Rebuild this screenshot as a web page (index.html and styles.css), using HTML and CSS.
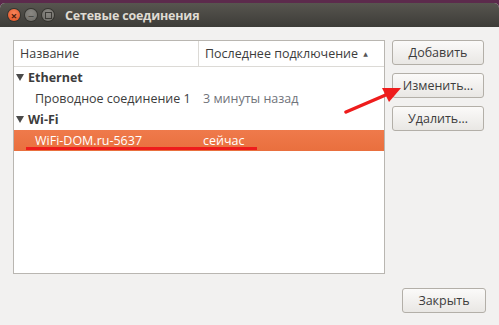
FILE: index.html
```html
<!DOCTYPE html>
<html lang="ru">
<head>
    <meta charset="UTF-8">
    <title>Сетевые соединения</title>
    <link rel="stylesheet" href="styles.css">
</head>
<body>
    <div class="window">
        <div class="titlebar">
            <span class="wbtn close">&times;</span>
            <span class="wbtn minimize">&minus;</span>
            <span class="wbtn maximize"><i></i></span>
            <span class="title">Сетевые соединения</span>
        </div>

        <div class="content">
            <div class="main-row">
                <div class="tree">
                    <div class="tree-header">
                        <div class="col-name">Название</div>
                        <div class="col-last">Последнее подключение <span class="sort">&#9650;</span></div>
                    </div>
                    <div class="row group"><span class="expander"></span>Ethernet</div>
                    <div class="row child">
                        <div class="col-name">Проводное соединение 1</div>
                        <div class="col-last muted">3 минуты назад</div>
                    </div>
                    <div class="row group"><span class="expander"></span>Wi-Fi</div>
                    <div class="row child selected">
                        <div class="col-name">WiFi-DOM.ru-5637</div>
                        <div class="col-last">сейчас</div>
                    </div>
                </div>

                <div class="actions">
                    <button>Добавить</button>
                    <button>Изменить…</button>
                    <button>Удалить…</button>
                </div>
            </div>

            <div class="footer">
                <button class="close-btn">Закрыть</button>
            </div>
        </div>

        <!-- annotation marks drawn over the screenshot -->
        <div class="underline"></div>
        <svg class="arrow" width="70" height="36" viewBox="0 0 70 36">
            <line x1="2" y1="32" x2="44" y2="14" stroke="#ee1c1c" stroke-width="3.5" stroke-linecap="round"/>
            <polygon points="57,8 38,8 45,22" fill="#ee1c1c"/>
        </svg>
    </div>
</body>
</html>
```

FILE: styles.css
```css
/* Global */
body {
    margin: 0;
    background: #5c2a4c;
    font-family: "Open Sans", "DejaVu Sans", sans-serif;
    font-size: 12.5px;
    color: #3c3c3c;
}

.window {
    position: relative;
    margin-top: 3px;
    height: 322px;
    background: #f2f1f0;
    border-radius: 5px 5px 0 0;
    overflow: hidden;
}

/* Title bar */
.titlebar {
    height: 24px;
    display: flex;
    align-items: center;
    padding-left: 8px;
    background: linear-gradient(#57554f, #3d3c38);
}

.wbtn {
    width: 12px;
    height: 12px;
    border-radius: 50%;
    margin-right: 5px;
    display: flex;
    align-items: center;
    justify-content: center;
    font-size: 11px;
    line-height: 1;
    color: #3b3a36;
    background: radial-gradient(circle at 50% 35%, #8a8883, #6c6a65);
    box-shadow: 0 0 0 1px #35342f;
}

.wbtn.close {
    background: radial-gradient(circle at 50% 35%, #f8845a, #df4f20);
    color: #4a1c0c;
    font-weight: bold;
}

.wbtn.maximize i {
    width: 5px;
    height: 5px;
    border: 1px solid #3b3a36;
}

.title {
    margin-left: 6px;
    font-weight: bold;
    font-size: 12.5px;
    letter-spacing: -0.2px;
    color: #dfdbd2;
}

/* Content */
.content {
    padding: 13px 13px 0 13px;
}

.main-row {
    display: flex;
    gap: 7px;
}

.tree {
    width: 370px;
    height: 232px;
    background: #fff;
    border: 1px solid #b9b6b1;
}

.tree-header {
    display: flex;
    height: 25px;
    align-items: center;
    border-bottom: 1px solid #dcdad6;
}

.tree-header .col-name {
    width: 178px;
    padding-left: 6px;
    border-right: 1px solid #dcdad6;
    height: 100%;
    display: flex;
    align-items: center;
}

.tree-header .col-last {
    padding-left: 6px;
}

.sort {
    font-size: 6px;
    vertical-align: 2px;
    margin-left: 2px;
    color: #555;
}

.row {
    height: 21px;
    display: flex;
    align-items: center;
}

.row.group {
    font-weight: bold;
    padding-left: 2px;
}

.expander {
    width: 0;
    height: 0;
    border-left: 4px solid transparent;
    border-right: 4px solid transparent;
    border-top: 7px solid #4a4a4a;
    margin-right: 4px;
}

.row.child .col-name {
    width: 168px;
    padding-left: 21px;
}

.muted {
    color: #70737a;
}

.row.selected {
    background: linear-gradient(#ef7a4b, #e96f3e);
    color: #fff;
}

/* Buttons */
.actions {
    display: flex;
    flex-direction: column;
    gap: 8px;
    width: 92px;
}

button {
    height: 25px;
    font-family: inherit;
    font-size: 12.5px;
    color: #3c3c3c;
    background: linear-gradient(#fbfaf9, #e9e7e4);
    border: 1px solid #b3afa8;
    border-radius: 3px;
    padding: 0;
}

.footer {
    display: flex;
    justify-content: flex-end;
    margin-top: 14px;
}

.close-btn {
    width: 84px;
}

/* Annotations */
.underline {
    position: absolute;
    left: 26px;
    top: 144px;
    width: 231px;
    height: 3px;
    background: #ee1c1c;
}

.arrow {
    position: absolute;
    left: 344px;
    top: 77px;
}
```
